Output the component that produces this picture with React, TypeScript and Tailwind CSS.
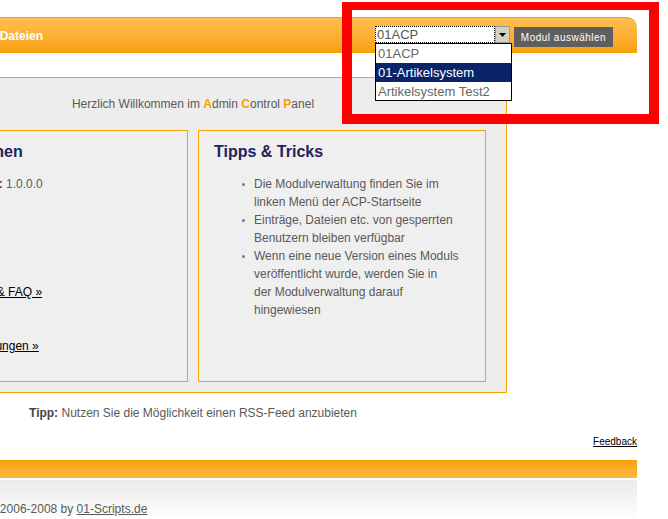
import React from "react";

function SelectBox() {
  return (
    <div className="relative flex h-[17px] w-[135px]">
      <div className="flex h-[17px] w-[120px] items-center border border-dotted border-black bg-white pl-[1px] text-[13px] leading-[15px] text-[#555]">
        01ACP
      </div>
      <div className="flex h-[17px] w-[15px] items-center justify-center border border-[#9a9a9a] bg-[#d4d0c8]">
        <svg width="7" height="4" viewBox="0 0 7 4">
          <path d="M0 0H7L3.5 4Z" fill="#000" />
        </svg>
      </div>
      <div className="absolute left-0 top-[17px] z-10 w-[137px] border border-black bg-white text-[13px] leading-[19px] text-[#666]">
        <div className="h-[19px] pl-[2px]">01ACP</div>
        <div className="h-[19px] bg-[#0a246a] pl-[2px] text-white">01-Artikelsystem</div>
        <div className="h-[18px] pl-[2px]">Artikelsystem Test2</div>
      </div>
    </div>
  );
}

function Bullet({ children }: { children: React.ReactNode }) {
  return (
    <li className="flex">
      <span className="mt-[8px] mr-[9px] ml-[28px] h-[3px] w-[3px] shrink-0 rounded-full bg-[#777]" />
      <span>{children}</span>
    </li>
  );
}

export default function App() {
  return (
    <div className="relative h-[519px] w-[668px] overflow-hidden bg-white font-['Liberation_Sans',Arial,sans-serif] text-[12px] text-[#595959]">
      <div className="ml-[-121px] w-[758px] pt-[17px]">
        {/* header */}
        <div className="flex h-[36px] items-start rounded-tr-[10px] border-t border-[#eca331] bg-gradient-to-b from-[#ffbf50] to-[#f7a000]">
          <nav className="flex h-[35px] w-[164px] items-center justify-end gap-[14px] text-[12px] font-bold text-white">
            <span>Module</span>
            <span>Dateien</span>
          </nav>
          <div className="ml-auto mr-[24px] flex items-start gap-[4px] pt-[8px]">
            <SelectBox />
            <button className="mt-[1px] h-[20px] w-[99px] bg-[#5f5f5f] text-[10px] tracking-[0.5px] text-white">
              Modul auswählen
            </button>
          </div>
        </div>

        {/* main panel */}
        <div className="mt-[24px] w-[628px] border border-[#f5a400] bg-[#ededed] px-[20px] pt-[17px] pb-[10px]">
          <p className="text-center leading-[18px]">
            Herzlich Willkommen im <b className="text-[#f7a000]">A</b>dmin{" "}
            <b className="text-[#f7a000]">C</b>ontrol <b className="text-[#f7a000]">P</b>anel
          </p>
          <div className="mt-[17px] flex gap-[10px]">
            <div className="h-[252px] w-[288px] border border-[#f5a400] bg-[#efefef] px-[15px] pt-[11px]">
              <h2 className="text-[16px] font-bold leading-[20px] text-[#23235b]">Informationen</h2>
              <div className="mt-[13px] leading-[18px]">
                <p>
                  <b className="text-[#444]">Modul-Version:</b> 1.0.0.0
                </p>
                <p className="mt-[90px]">
                  <a className="text-black underline">Support-Foren &amp; FAQ »</a>
                </p>
                <p className="mt-[36px]">
                  <a className="text-black underline">Zu den Einstellungen »</a>
                </p>
              </div>
            </div>
            <div className="h-[252px] w-[288px] border border-[#f5a400] bg-[#efefef] px-[15px] pt-[11px]">
              <h2 className="text-[16px] font-bold leading-[20px] text-[#23235b]">Tipps &amp; Tricks</h2>
              <ul className="mt-[13px] leading-[18px]">
                <Bullet>
                  Die Modulverwaltung finden Sie im
                  <br />
                  linken Menü der ACP-Startseite
                </Bullet>
                <Bullet>
                  Einträge, Dateien etc. von gesperrten
                  <br />
                  Benutzern bleiben verfügbar
                </Bullet>
                <Bullet>
                  Wenn eine neue Version eines Moduls
                  <br />
                  veröffentlicht wurde, werden Sie in
                  <br />
                  der Modulverwaltung darauf
                  <br />
                  hingewiesen
                </Bullet>
              </ul>
            </div>
          </div>
        </div>

        <p className="mt-[11px] w-[628px] text-center leading-[18px]">
          <b className="text-[#444]">Tipp:</b> Nutzen Sie die Möglichkeit einen RSS-Feed anzubieten
        </p>

        <div className="mt-[12px] text-right text-[10px] leading-[16px]">
          <a className="text-black underline">Feedback</a>
        </div>

        <div className="mt-[10px] h-[18px] bg-gradient-to-b from-[#f8a000] to-[#fdb840]" />
        <div className="mt-[2px] h-[40px] bg-gradient-to-b from-[#eaeaea] to-white pt-[20px] pl-[54px] leading-[18px]">
          Copyright © 2006-2008 by <a className="underline">01-Scripts.de</a>
        </div>
      </div>

      {/* red highlight frame */}
      <div className="pointer-events-none absolute left-[342px] top-[2px] h-[122px] w-[317px] border-[10px] border-t-[8px] border-[#ff0000]" />
    </div>
  );
}
